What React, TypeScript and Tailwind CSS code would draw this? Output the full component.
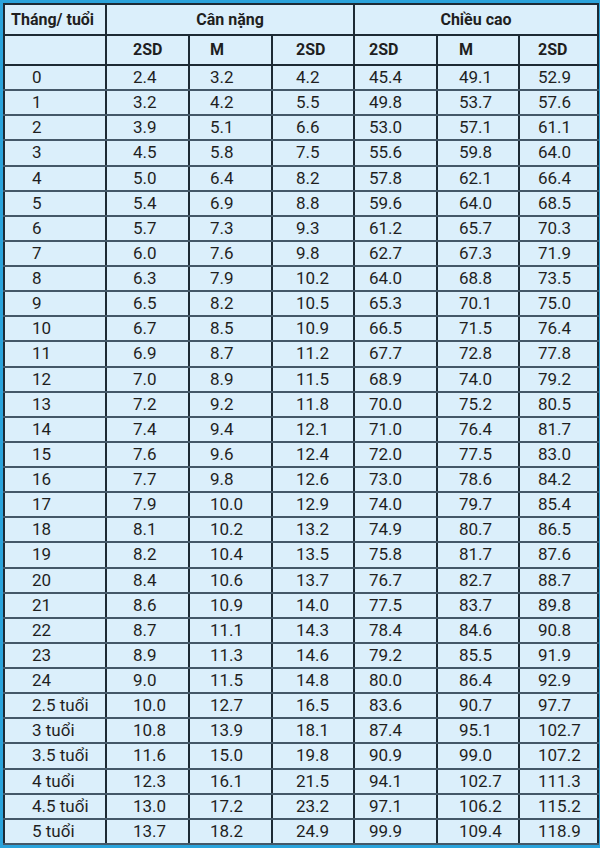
import React from "react";

const rows: [string, string, string, string, string, string, string][] = [
  ["0", "2.4", "3.2", "4.2", "45.4", "49.1", "52.9"],
  ["1", "3.2", "4.2", "5.5", "49.8", "53.7", "57.6"],
  ["2", "3.9", "5.1", "6.6", "53.0", "57.1", "61.1"],
  ["3", "4.5", "5.8", "7.5", "55.6", "59.8", "64.0"],
  ["4", "5.0", "6.4", "8.2", "57.8", "62.1", "66.4"],
  ["5", "5.4", "6.9", "8.8", "59.6", "64.0", "68.5"],
  ["6", "5.7", "7.3", "9.3", "61.2", "65.7", "70.3"],
  ["7", "6.0", "7.6", "9.8", "62.7", "67.3", "71.9"],
  ["8", "6.3", "7.9", "10.2", "64.0", "68.8", "73.5"],
  ["9", "6.5", "8.2", "10.5", "65.3", "70.1", "75.0"],
  ["10", "6.7", "8.5", "10.9", "66.5", "71.5", "76.4"],
  ["11", "6.9", "8.7", "11.2", "67.7", "72.8", "77.8"],
  ["12", "7.0", "8.9", "11.5", "68.9", "74.0", "79.2"],
  ["13", "7.2", "9.2", "11.8", "70.0", "75.2", "80.5"],
  ["14", "7.4", "9.4", "12.1", "71.0", "76.4", "81.7"],
  ["15", "7.6", "9.6", "12.4", "72.0", "77.5", "83.0"],
  ["16", "7.7", "9.8", "12.6", "73.0", "78.6", "84.2"],
  ["17", "7.9", "10.0", "12.9", "74.0", "79.7", "85.4"],
  ["18", "8.1", "10.2", "13.2", "74.9", "80.7", "86.5"],
  ["19", "8.2", "10.4", "13.5", "75.8", "81.7", "87.6"],
  ["20", "8.4", "10.6", "13.7", "76.7", "82.7", "88.7"],
  ["21", "8.6", "10.9", "14.0", "77.5", "83.7", "89.8"],
  ["22", "8.7", "11.1", "14.3", "78.4", "84.6", "90.8"],
  ["23", "8.9", "11.3", "14.6", "79.2", "85.5", "91.9"],
  ["24", "9.0", "11.5", "14.8", "80.0", "86.4", "92.9"],
  ["2.5 tuổi", "10.0", "12.7", "16.5", "83.6", "90.7", "97.7"],
  ["3 tuổi", "10.8", "13.9", "18.1", "87.4", "95.1", "102.7"],
  ["3.5 tuổi", "11.6", "15.0", "19.8", "90.9", "99.0", "107.2"],
  ["4 tuổi", "12.3", "16.1", "21.5", "94.1", "102.7", "111.3"],
  ["4.5 tuổi", "13.0", "17.2", "23.2", "97.1", "106.2", "115.2"],
  ["5 tuổi", "13.7", "18.2", "24.9", "99.9", "109.4", "118.9"],
];

// left padding of each column, read off the picture
const pads = ["pl-[27px]", "pl-[26px]", "pl-[20px]", "pl-[23px]", "pl-[14px]", "pl-[21px]", "pl-[18px]"];

export default function App() {
  return (
    <div className="w-[600px] h-[848px] bg-[#2ba3db] p-[3px] font-['Roboto',sans-serif] text-[#1f1f1f]">
      <table className="w-[594px] h-[842px] table-fixed border-collapse border-2 border-[#1d2a34] bg-[#dbeffb] text-[17px] leading-none">
        <colgroup>
          <col className="w-[102px]" />
          <col className="w-[83px]" />
          <col className="w-[83px]" />
          <col className="w-[82px]" />
          <col className="w-[83px]" />
          <col className="w-[82px]" />
          <col className="w-[79px]" />
        </colgroup>
        <thead className="text-[16px]">
          <tr className="h-[31px]">
            <th className="border-2 border-[#1d2a34] pl-[6px] text-left font-bold">Tháng/ tuổi</th>
            <th colSpan={3} className="border-2 border-[#1d2a34] text-center font-bold">
              Cân nặng
            </th>
            <th colSpan={3} className="border-2 border-[#1d2a34] text-center font-bold">
              Chiều cao
            </th>
          </tr>
          <tr className="h-[30px]">
            <th className="border-2 border-[#1d2a34]"></th>
            {["2SD", "M", "2SD", "2SD", "M", "2SD"].map((h, i) => (
              <th key={i} className={`border-2 border-[#1d2a34] text-left font-bold ${pads[i + 1]}`}>
                {h}
              </th>
            ))}
          </tr>
        </thead>
        <tbody>
          {rows.map((r) => (
            <tr key={r[0]} className="h-[25px]">
              {r.map((v, i) => (
                <td
                  key={i}
                  className={`border-x-2 border-y-2 border-x-[#1d2a34] border-y-[#445868] text-left align-middle ${pads[i]}`}
                >
                  {v}
                </td>
              ))}
            </tr>
          ))}
        </tbody>
      </table>
    </div>
  );
}
